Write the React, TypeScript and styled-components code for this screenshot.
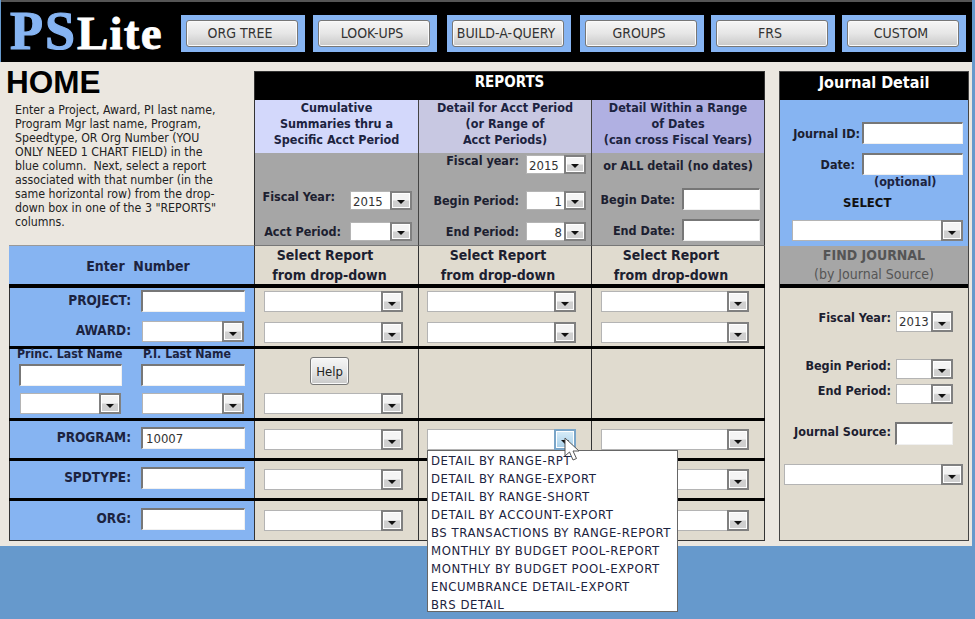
import React from 'react'
import styled, { createGlobalStyle } from 'styled-components'

const UI_FONT = '"DejaVu Sans Condensed", "DejaVu Sans", sans-serif'

const Global = createGlobalStyle`
  html, body { margin: 0; background: #6699cc; }
  body { font-family: ${UI_FONT}; color: #1c2030; }
`

// ── Shell ──────────────────────────────────────────────────────────

const Page = styled.div`
  width: 975px;
  height: 619px;
  overflow: hidden;
  background: #6699cc;
`

const Header = styled.header`
  box-sizing: border-box;
  width: 971px;
  height: 62px;
  margin-left: 1px;
  padding-top: 13px;
  border-top: 2px solid #555;
  background: #000;
  display: flex;
  align-items: flex-start;
`

const Logo = styled.div`
  width: 180px;
  margin-top: -8px;
  padding-left: 9px;
  box-sizing: border-box;
  font-family: "Liberation Serif", serif;
  font-weight: 700;
  white-space: nowrap;
  line-height: 48px;
`

const LogoPS = styled.span`
  font-size: 54px;
  color: #86b4f2;
  letter-spacing: 2px;
  -webkit-text-stroke: 1.2px #86b4f2;
`

const LogoLite = styled.span`
  font-size: 47px;
  color: #fff;
  letter-spacing: 1.2px;
  -webkit-text-stroke: 0.8px #fff;
`

const Tab = styled.div<{ $gap: number }>`
  box-sizing: border-box;
  width: 124px;
  height: 37px;
  margin-left: ${(p) => p.$gap}px;
  padding: 5px 7px 5px 5px;
  background: #86b4f2;
`

const Button = styled.button`
  box-sizing: border-box;
  width: 100%;
  height: 100%;
  padding: 0 4px 2px 0;
  border: 1px solid #777;
  border-radius: 3px;
  background: linear-gradient(#f6f6f6, #e6e6e6 50%, #c8c8c8);
  box-shadow: inset 0 0 0 1px #fafafa;
  font-family: ${UI_FONT};
  font-size: 14px;
  color: #333;
`

const HelpButton = styled(Button)`
  width: 39px;
  height: 28px;
  padding: 0;
  font-size: 13px;
  color: #222;
`

const Body = styled.main`
  width: 972px;
  height: 484px;
  background: #ebe7e0;
  display: flex;
  align-items: flex-start;
`

const LeftArea = styled.div`
  width: 765px;
  flex: none;
`

const TopRow = styled.div`
  display: flex;
  height: 183px;
`

const Intro = styled.div`
  width: 254px;
  flex: none;
  box-sizing: border-box;
`

const Home = styled.h1`
  margin: 4px 0 0 6px;
  font-family: "Liberation Sans", sans-serif;
  font-size: 31.5px;
  line-height: 32px;
  font-weight: 700;
  color: #000;
`

const IntroText = styled.p`
  margin: 5px 0 0 15px;
  font-size: 12.25px;
  line-height: 14px;
  color: #222;
  white-space: nowrap;
`

// ── Reports block ──────────────────────────────────────────────────

const Reports = styled.section`
  box-sizing: border-box;
  width: 511px;
  height: 174px;
  margin-top: 9px;
  border: solid #333;
  border-width: 1px 1px 0 1px;
  display: flex;
  flex-direction: column;
`

const BlackTitle = styled.div<{ $size: number }>`
  flex: none;
  height: 28px;
  background: #000;
  color: #fff;
  font-size: ${(p) => p.$size}px;
  line-height: 21px;
  font-weight: 700;
  text-align: center;
`

const ReportCols = styled.div`
  flex: 1;
  display: grid;
  grid-template-columns: 163px 173px 173px;
`

const ReportCol = styled.div<{ $divider?: boolean }>`
  display: flex;
  flex-direction: column;
  box-sizing: border-box;
  border-left: ${(p) => (p.$divider ? '1px solid #444' : 'none')};
`

const ColHead = styled.div<{ $bg: string }>`
  flex: none;
  height: 53px;
  box-sizing: border-box;
  background: ${(p) => p.$bg};
  font-size: 12.5px;
  line-height: 16px;
  font-weight: 700;
  text-align: center;
  color: #1c2340;
`

const GrayArea = styled.div<{ $top: number; $gap: number; $right: number }>`
  flex: 1;
  background: #a6a6a6;
  box-sizing: border-box;
  padding: ${(p) => p.$top}px ${(p) => p.$right}px 0 0;
  display: flex;
  flex-direction: column;
  gap: ${(p) => p.$gap}px;
`

const FieldRow = styled.div<{ $gap?: number; $shift?: number }>`
  display: flex;
  align-items: center;
  justify-content: flex-end;
  gap: ${(p) => p.$gap ?? 7}px;
  margin-top: ${(p) => p.$shift ?? 0}px;
`

const BoldLabel = styled.label<{ $raise?: number }>`
  font-size: 12.5px;
  font-weight: 700;
  color: #1c2030;
  white-space: nowrap;
  position: relative;
  top: ${(p) => -(p.$raise ?? 0)}px;
`

const GrayNote = styled.div`
  margin: 5px 0 0 4px;
  height: 16px;
  font-size: 12.5px;
  line-height: 16px;
  font-weight: 700;
  text-align: center;
  white-space: nowrap;
`

// ── Form controls ──────────────────────────────────────────────────

const TextField = styled.div<{ $w: number; $h?: number }>`
  box-sizing: border-box;
  flex: none;
  width: ${(p) => p.$w}px;
  height: ${(p) => p.$h ?? 22}px;
  padding-left: 3px;
  background: #fff;
  border: solid;
  border-width: 2px 1px 1px 2px;
  border-color: #777 #f0f0f0 #f0f0f0 #777;
  font-size: 13px;
  line-height: 20px;
  color: #333;
`

const ComboBox = styled.div<{ $w: number; $h: number }>`
  box-sizing: border-box;
  flex: none;
  display: flex;
  width: ${(p) => p.$w}px;
  height: ${(p) => p.$h}px;
  border: 1px solid #b4b4b4;
  background: #fff;
`

const ComboValue = styled.div<{ $right?: boolean }>`
  flex: 1;
  min-width: 0;
  padding: 0 2px;
  font-size: 13px;
  line-height: 19px;
  color: #333;
  text-align: ${(p) => (p.$right ? 'right' : 'left')};
`

const ComboArrow = styled.div<{ $active?: boolean }>`
  box-sizing: border-box;
  flex: none;
  width: 22px;
  margin: -1px -1px -1px 0;
  display: flex;
  align-items: flex-end;
  justify-content: center;
  padding-bottom: 4px;
  border: 2px solid ${(p) => (p.$active ? '#7aa5c8' : '#808080')};
  box-shadow: inset 0 0 0 1px #fff;
  background: ${(p) =>
    p.$active
      ? 'linear-gradient(#d8ecf8, #a8d0ea)'
      : 'linear-gradient(#f4f4f4 45%, #d0d0d0 55%)'};
  &::after {
    content: '';
    border: solid transparent;
    border-width: 4px 4.5px 0;
    border-top-color: #111;
  }
`

function Combo({ w = 139, h = 21, value, right, active }: {
  w?: number; h?: number; value?: string; right?: boolean; active?: boolean
}) {
  return (
    <ComboBox $w={w} $h={h}>
      <ComboValue $right={right}>{value}</ComboValue>
      <ComboArrow $active={active} />
    </ComboBox>
  )
}

// ── Entry table ────────────────────────────────────────────────────

const Table = styled.div`
  margin-left: 9px;
  width: 756px;
`

const Row = styled.div<{ $h: number; $rule: number }>`
  box-sizing: border-box;
  display: grid;
  grid-template-columns: 245px 164px 173px 174px;
  grid-template-rows: 100%;
  height: ${(p) => p.$h}px;
  border-top: ${(p) => p.$rule}px solid #000;
`

const BlueCell = styled.div<{ $last?: boolean; $flush?: boolean }>`
  background: #86b4f2;
  display: flex;
  flex-direction: column;
  justify-content: center;
  gap: 9px;
  padding-bottom: ${(p) => (p.$flush ? 0 : 3)}px;
  border-bottom: ${(p) => (p.$last ? '1px solid #333' : 'none')};
  border-left: 1px solid #333;
  box-sizing: border-box;
`

const BlueHead = styled(BlueCell)`
  border-left: none;
  border-top: 1px solid #999;
  align-items: center;
  padding: 2px 0 0 13px;
  font-size: 14px;
  font-weight: 700;
  white-space: pre;
  color: #1c2340;
`

const BlueField = styled.div`
  display: flex;
  align-items: center;
  gap: 10px;
`

const FieldLabel = styled.label`
  width: 121px;
  flex: none;
  position: relative;
  top: -1px;
  text-align: right;
  font-size: 13.5px;
  font-weight: 700;
  color: #1c2340;
`

const ComboIndent = styled.div`
  margin-left: 1px;
`

const NameGrid = styled.div`
  display: grid;
  grid-template-columns: 103px 104px;
  column-gap: 19px;
  padding: 0 0 0 9px;
  height: 100%;
  align-content: flex-start;
`

const NameLabel = styled.div<{ $left: number }>`
  height: 15px;
  margin-left: ${(p) => p.$left}px;
  font-size: 12.25px;
  line-height: 11px;
  font-weight: 700;
  white-space: nowrap;
  color: #1c2340;
`

const NameInputRow = styled.div`
  margin-top: 0;
`

const NameComboRow = styled.div`
  margin: 7px 0 0 1px;
`

const ReportCell = styled.div<{ $pad: number; $bottom?: boolean; $last?: boolean }>`
  position: relative;
  box-sizing: border-box;
  background: #e0dbcf;
  border-left: 1px solid #333;
  border-bottom: ${(p) => (p.$last ? '1px solid #333' : 'none')};
  padding-left: ${(p) => p.$pad}px;
  padding-bottom: ${(p) => (p.$bottom ? 4 : 0)}px;
  display: flex;
  flex-direction: column;
  justify-content: ${(p) => (p.$bottom ? 'flex-end' : 'center')};
  gap: 10px;
  &:last-child { border-right: 1px solid #333; }
`

const HeadCell = styled(ReportCell)`
  padding: 0 14px 0 0;
  border-top: 1px solid #777;
  align-items: center;
  font-size: 14px;
  line-height: 20px;
  font-weight: 700;
  color: #1c2030;
  text-align: center;
  gap: 0;
`

const HeadLine = styled.div<{ $nudge?: number }>`
  margin-right: ${(p) => p.$nudge ?? 0}px;
  white-space: nowrap;
`

const HelpRow = styled.div`
  margin: 0 0 -2px 46px;
`

const ComboAnchor = styled.div`
  position: relative;
  z-index: 2;
`

const Menu = styled.ul`
  position: absolute;
  left: 0;
  top: 21px;
  box-sizing: border-box;
  width: 251px;
  height: 162px;
  margin: 0;
  padding: 1px 0 0 3px;
  list-style: none;
  background: #fff;
  border: 1px solid #666;
`

const MenuItem = styled.li`
  height: 18px;
  font-size: 13px;
  letter-spacing: 0.55px;
  line-height: 18px;
  color: #1c2340;
  white-space: nowrap;
`

const Cursor = styled.svg`
  position: absolute;
  left: 137px;
  top: 8px;
  width: 18px;
  height: 26px;
`

// ── Journal panel ──────────────────────────────────────────────────

const Journal = styled.aside`
  box-sizing: border-box;
  width: 190px;
  height: 470px;
  margin: 9px 0 0 14px;
  border: 1px solid #444;
  display: flex;
  flex-direction: column;
`

const JournalBlue = styled.div`
  flex: none;
  height: 146px;
  box-sizing: border-box;
  padding: 22px 5px 0 0;
  background: #86b4f2;
  display: flex;
  flex-direction: column;
  align-items: flex-end;
`

const OptionalNote = styled.div`
  align-self: flex-start;
  margin-left: 94px;
  height: 13px;
  font-size: 12.5px;
  line-height: 13px;
  font-weight: 700;
  color: #1c2340;
`

const SelectNote = styled.div`
  align-self: flex-start;
  margin: 7px 0 9px 63px;
  font-size: 13px;
  line-height: 16px;
  font-weight: 700;
  color: #111;
`

const JournalFind = styled.div`
  flex: none;
  height: 38px;
  background: #a6a6a6;
  text-align: center;
  font-size: 14px;
  line-height: 19px;
  color: #555;
`

const FindTitle = styled.div`
  font-weight: 700;
`

const JournalLower = styled.div`
  flex: 1;
  background: #e0dbcf;
  border-top: 4px solid #000;
  padding: 23px 15px 0 0;
  display: flex;
  flex-direction: column;
`

const WideCombo = styled.div`
  margin: 19px 0 0 4px;
`

// ── Data ───────────────────────────────────────────────────────────

const TABS = [
  { label: 'ORG TREE', gap: 0 },
  { label: 'LOOK-UPS', gap: 8 },
  { label: 'BUILD-A-QUERY', gap: 10 },
  { label: 'GROUPS', gap: 9 },
  { label: 'FRS', gap: 7 },
  { label: 'CUSTOM', gap: 7 },
]

const MENU = [
  'DETAIL BY RANGE-RPT',
  'DETAIL BY RANGE-EXPORT',
  'DETAIL BY RANGE-SHORT',
  'DETAIL BY ACCOUNT-EXPORT',
  'BS TRANSACTIONS BY RANGE-REPORT',
  'MONTHLY BY BUDGET POOL-REPORT',
  'MONTHLY BY BUDGET POOL-EXPORT',
  'ENCUMBRANCE DETAIL-EXPORT',
  'BRS DETAIL',
]

function SimpleRow({ h, rule, label, value, last, children }: {
  h: number; rule: number; label: string; value?: string; last?: boolean; children?: React.ReactNode
}) {
  return (
    <Row $h={h} $rule={rule}>
      <BlueCell $last={last}>
        <BlueField>
          <FieldLabel>{label}</FieldLabel>
          <TextField $w={104}>{value}</TextField>
        </BlueField>
      </BlueCell>
      <ReportCell $pad={9} $last={last}><Combo /></ReportCell>
      <ReportCell $pad={8} $last={last}>{children ?? <Combo w={149} />}</ReportCell>
      <ReportCell $pad={9} $last={last}><Combo w={148} /></ReportCell>
    </Row>
  )
}

export default function App() {
  return (
    <Page>
      <Global />
      <Header>
        <Logo><LogoPS>PS</LogoPS><LogoLite>Lite</LogoLite></Logo>
        {TABS.map((t) => (
          <Tab key={t.label} $gap={t.gap}><Button type="button">{t.label}</Button></Tab>
        ))}
      </Header>
      <Body>
        <LeftArea>
          <TopRow>
            <Intro>
              <Home>HOME</Home>
              <IntroText>
                Enter a Project, Award, PI last name,<br />
                Program Mgr last name, Program,<br />
                Speedtype, OR Org Number (YOU<br />
                ONLY NEED 1 CHART FIELD) in the<br />
                blue column.&nbsp; Next, select a report<br />
                associated with that number (in the<br />
                same horizontal row) from the drop-<br />
                down box in one of the 3 "REPORTS"<br />
                columns.
              </IntroText>
            </Intro>
            <Reports>
              <BlackTitle $size={15}>REPORTS</BlackTitle>
              <ReportCols>
                <ReportCol>
                  <ColHead $bg="#d3d8fb">Cumulative<br />Summaries thru a<br />Specific Acct Period</ColHead>
                  <GrayArea $top={38} $gap={12} $right={6}>
                    <FieldRow $gap={15}><BoldLabel $raise={4}>Fiscal Year:</BoldLabel><Combo w={62} h={19} value="2015" /></FieldRow>
                    <FieldRow $gap={9}><BoldLabel>Acct Period:</BoldLabel><Combo w={62} h={19} /></FieldRow>
                  </GrayArea>
                </ReportCol>
                <ReportCol $divider>
                  <ColHead $bg="#c8c8e2">Detail for Acct Period<br />(or Range of<br />Acct Periods)</ColHead>
                  <GrayArea $top={2} $gap={12} $right={5}>
                    <FieldRow><BoldLabel $raise={4}>Fiscal year:</BoldLabel><Combo w={60} h={19} value="2015" /></FieldRow>
                    <FieldRow $shift={5}><BoldLabel>Begin Period:</BoldLabel><Combo w={60} h={19} value="1" right /></FieldRow>
                    <FieldRow><BoldLabel>End Period:</BoldLabel><Combo w={60} h={19} value="8" right /></FieldRow>
                  </GrayArea>
                </ReportCol>
                <ReportCol $divider>
                  <ColHead $bg="#b0b0e2">Detail Within a Range<br />of Dates<br />(can cross Fiscal Years)</ColHead>
                  <GrayArea $top={0} $gap={9} $right={4}>
                    <GrayNote>or ALL detail (no dates)</GrayNote>
                    <FieldRow $shift={5}><BoldLabel>Begin Date:</BoldLabel><TextField $w={78} /></FieldRow>
                    <FieldRow><BoldLabel>End Date:</BoldLabel><TextField $w={78} /></FieldRow>
                  </GrayArea>
                </ReportCol>
              </ReportCols>
            </Reports>
          </TopRow>
          <Table>
            <Row $h={39} $rule={0}>
              <BlueHead>Enter  Number</BlueHead>
              <HeadCell $pad={0}><HeadLine $nudge={9}>Select Report</HeadLine><HeadLine>from drop-down</HeadLine></HeadCell>
              <HeadCell $pad={0}><HeadLine>Select Report</HeadLine><HeadLine>from drop-down</HeadLine></HeadCell>
              <HeadCell $pad={0}><HeadLine>Select Report</HeadLine><HeadLine>from drop-down</HeadLine></HeadCell>
            </Row>
            <Row $h={62} $rule={4}>
              <BlueCell>
                <BlueField><FieldLabel>PROJECT:</FieldLabel><TextField $w={104}></TextField></BlueField>
                <BlueField><FieldLabel>AWARD:</FieldLabel><ComboIndent><Combo w={102} /></ComboIndent></BlueField>
              </BlueCell>
              <ReportCell $pad={9}><Combo /><Combo /></ReportCell>
              <ReportCell $pad={8}><Combo w={149} /><Combo w={149} /></ReportCell>
              <ReportCell $pad={9}><Combo w={148} /><Combo w={148} /></ReportCell>
            </Row>
            <Row $h={72} $rule={3}>
              <BlueCell $flush>
                <NameGrid>
                  <NameLabel $left={-2}>Princ. Last Name</NameLabel>
                  <NameLabel $left={2}>P.I. Last Name</NameLabel>
                  <NameInputRow><TextField $w={103} /></NameInputRow>
                  <NameInputRow><TextField $w={104} /></NameInputRow>
                  <NameComboRow><Combo w={101} /></NameComboRow>
                  <NameComboRow><Combo w={102} /></NameComboRow>
                </NameGrid>
              </BlueCell>
              <ReportCell $pad={9} $bottom>
                <HelpRow><HelpButton type="button">Help</HelpButton></HelpRow>
                <Combo />
              </ReportCell>
              <ReportCell $pad={8} />
              <ReportCell $pad={9} />
            </Row>
            <SimpleRow h={40} rule={3} label="PROGRAM:" value="10007">
              <ComboAnchor>
                <Combo w={149} active />
                <Menu>{MENU.map((m) => <MenuItem key={m}>{m}</MenuItem>)}</Menu>
                <Cursor viewBox="0 0 18 26" aria-hidden="true">
                  <path d="M1 1 L1 19 L5.5 15 L9 23 L12.5 21.5 L9 14 L15 14 Z" fill="#fff" stroke="#555" strokeWidth="1" />
                </Cursor>
              </ComboAnchor>
            </SimpleRow>
            <SimpleRow h={40} rule={3} label="SPDTYPE:" />
            <SimpleRow h={43} rule={3} label="ORG:" last />
          </Table>
        </LeftArea>
        <Journal>
          <BlackTitle $size={16}>Journal Detail</BlackTitle>
          <JournalBlue>
            <FieldRow $gap={2}><BoldLabel>Journal ID:</BoldLabel><TextField $w={101} /></FieldRow>
            <FieldRow $gap={7} $shift={9}><BoldLabel>Date:</BoldLabel><TextField $w={101} /></FieldRow>
            <OptionalNote>(optional)</OptionalNote>
            <SelectNote>SELECT</SelectNote>
            <Combo w={171} />
          </JournalBlue>
          <JournalFind>
            <FindTitle>FIND JOURNAL</FindTitle>
            (by Journal Source)
          </JournalFind>
          <JournalLower>
            <FieldRow $gap={5}><BoldLabel $raise={4}>Fiscal Year:</BoldLabel><Combo w={57} value="2013" /></FieldRow>
            <FieldRow $gap={5} $shift={27}><BoldLabel $raise={4}>Begin Period:</BoldLabel><Combo w={57} h={20} /></FieldRow>
            <FieldRow $gap={5} $shift={5}><BoldLabel $raise={4}>End Period:</BoldLabel><Combo w={57} h={20} /></FieldRow>
            <FieldRow $gap={4} $shift={18}><BoldLabel $raise={2}>Journal Source:</BoldLabel><TextField $w={58} $h={23} /></FieldRow>
            <WideCombo><Combo w={179} /></WideCombo>
          </JournalLower>
        </Journal>
      </Body>
    </Page>
  )
}
